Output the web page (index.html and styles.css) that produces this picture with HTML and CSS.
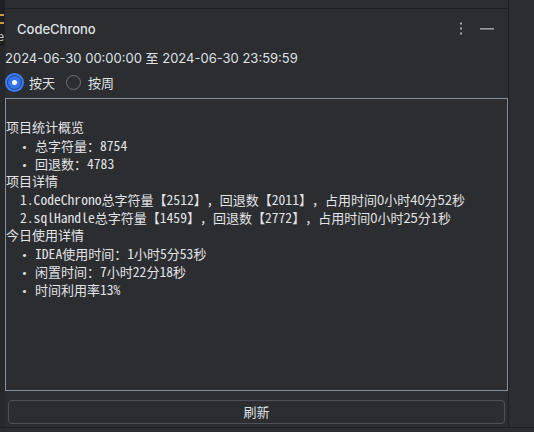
FILE: index.html
```html
<!DOCTYPE html>
<html lang="zh-CN">
<head>
<meta charset="utf-8">
<title>CodeChrono</title>
<link rel="stylesheet" href="styles.css">
</head>
<body>
<div class="screen">
  <div class="main">
    <div class="edge">
      <div class="edge-top">
        <span class="mark"></span>
        <span class="mark"></span>
        <span class="edge-e">e</span>
      </div>
    </div>
    <div class="panel">
      <div class="topbar"></div>
      <div class="header">
        <span class="title">CodeChrono</span>
        <div class="actions">
          <svg class="dots" width="4" height="14" viewBox="0 0 4 14"><rect x="1" y="0.5" width="2" height="2" fill="#a4a7ad"/><rect x="1" y="5.5" width="2" height="2" fill="#a4a7ad"/><rect x="1" y="10.5" width="2" height="2" fill="#a4a7ad"/></svg>
          <svg class="minus" width="14" height="4" viewBox="0 0 14 4"><rect x="0" y="1" width="14" height="1.6" fill="#9a9da3"/></svg>
        </div>
      </div>
      <div class="range">2024-06-30 00:00:00 至 2024-06-30 23:59:59</div>
      <div class="radios">
        <label class="opt"><span class="radio on"></span><span class="opt-text">按天</span></label>
        <label class="opt"><span class="radio"></span><span class="opt-text">按周</span></label>
      </div>
      <div class="output">
        <div class="ln"></div>
        <div class="ln">项目统计概览</div>
        <div class="ln li"><span class="dot">•</span>总字符量：<span class="m">8754</span></div>
        <div class="ln li"><span class="dot">•</span>回退数：<span class="m">4783</span></div>
        <div class="ln">项目详情</div>
        <div class="ln num"><span class="m">1.CodeChrono</span>总字符量【<span class="m">2512</span>】，回退数【<span class="m">2011</span>】，占用时间0小时40分52秒</div>
        <div class="ln num"><span class="m">2.sqlHandle</span>总字符量【<span class="m">1459</span>】，回退数【<span class="m">2772</span>】，占用时间0小时25分1秒</div>
        <div class="ln">今日使用详情</div>
        <div class="ln li"><span class="dot">•</span><span class="m">IDEA</span>使用时间：<span class="m">1</span>小时<span class="m">5</span>分<span class="m">53</span>秒</div>
        <div class="ln li"><span class="dot">•</span>闲置时间：<span class="m">7</span>小时<span class="m">22</span>分<span class="m">18</span>秒</div>
        <div class="ln li"><span class="dot">•</span>时间利用率<span class="m">13%</span></div>
      </div>
      <div class="btnrow"><button class="btn">刷新</button></div>
    </div>
    <div class="vline"></div>
    <div class="side"></div>
  </div>
  <div class="bottom"></div>
</div>
</body>
</html>
```
FILE: styles.css
```css
* { box-sizing: border-box; }
html, body {
  margin: 0;
  padding: 0;
  background: #2b2d30;
  width: 534px;
  height: 432px;
  overflow: hidden;
}
body {
  font-family: Inter, "Noto Sans CJK SC", sans-serif;
  font-size: 13px;
  color: #dfe1e5;
}
.screen {
  display: flex;
  flex-direction: column;
  width: 534px;
  height: 432px;
}
.main {
  display: flex;
  height: 427px;
}
.edge {
  width: 5px;
  background: #27282b;
}
.edge-top {
  height: 46px;
  background: #1f2023;
  display: flex;
  flex-direction: column;
  padding-top: 14px;
  overflow: hidden;
}
.mark {
  display: block;
  width: 4px;
  height: 2px;
  background: #c99a3c;
  margin-bottom: 6px;
}
.edge-e {
  font-family: "Liberation Sans", sans-serif;
  font-size: 13px;
  line-height: 10px;
  color: #bfc2c7;
  margin-left: -3px;
  margin-top: 2px;
}
.panel {
  width: 503px;
  display: flex;
  flex-direction: column;
  background: #2b2d30;
}
.topbar {
  height: 9px;
  border-bottom: 1px solid #1e1f22;
}
.header {
  height: 40px;
  display: flex;
  align-items: center;
  justify-content: space-between;
  padding-left: 12px;
  padding-right: 14px;
}
.title {
  font-weight: 500;
  font-size: 13px;
  color: #dfe1e5;
}
.actions {
  display: flex;
  align-items: center;
  gap: 17px;
}
.dots, .minus { display: block; }
.range {
  height: 19px;
  line-height: 19px;
  font-size: 13px;
  white-space: nowrap;
}
.radios {
  margin-top: 3px;
  height: 23px;
  display: flex;
  align-items: center;
  padding-left: 2px;
}
.opt {
  display: flex;
  align-items: center;
  margin-right: 11px;
}
.radio {
  width: 15px;
  height: 15px;
  border-radius: 50%;
  border: 1px solid #6f737a;
  margin-right: 7px;
  position: relative;
}
.radio.on {
  background: #3574f0;
  border-color: #24407a;
  box-shadow: 0 0 0 2px #3d7ef5;
}
.radio.on::after {
  content: "";
  position: absolute;
  left: 4px;
  top: 4px;
  width: 5px;
  height: 5px;
  border-radius: 50%;
  background: #ffffff;
}
.opt-text {
  font-family: "Noto Sans CJK SC", sans-serif;
  font-size: 13px;
  line-height: 18px;
}
.output {
  margin-top: 4px;
  height: 293px;
  border: 1px solid #85919d;
  padding-top: 1px;
  font-family: "Noto Sans CJK SC", sans-serif;
  font-size: 13px;
  color: #e2e3e6;
  text-spacing-trim: space-all;
}
.ln {
  height: 18px;
  line-height: 18px;
  white-space: nowrap;
}
.li { padding-left: 15px; }
.num { padding-left: 14px; }
.dot {
  display: inline-block;
  width: 14px;
  font-family: "Liberation Mono", monospace;
  font-size: 11.5px;
}
.m {
  font-family: "Noto Sans Mono CJK SC", "Liberation Mono", monospace;
  font-size: 13.6px;
  line-height: 18px;
}
.btnrow {
  margin-top: 9px;
  padding: 0 3px;
}
.btn {
  display: block;
  width: 100%;
  height: 24px;
  background: #2b2d30;
  border: 1px solid #4e5157;
  border-radius: 4px;
  color: #dfe1e5;
  font-family: "Noto Sans CJK SC", sans-serif;
  font-size: 13px;
  padding: 0;
  line-height: 20px;
}
.vline {
  width: 1px;
  background: #1e1f22;
}
.side {
  flex: 1;
  background: #2b2d30;
}
.bottom {
  flex: 1;
  border-top: 1px solid #1e1f22;
  background: #2b2d30;
}
```
